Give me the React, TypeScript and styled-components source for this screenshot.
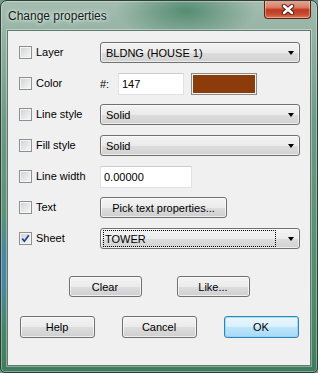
import React from 'react';
import styled, { createGlobalStyle } from 'styled-components';

const GlobalStyle = createGlobalStyle`
  html, body {
    margin: 0;
    padding: 0;
    background: #6f9a86;
  }
  * {
    box-sizing: border-box;
  }
`;

const Window = styled.div`
  width: 318px;
  height: 373px;
  display: flex;
  flex-direction: column;
  border: 1px solid #2f3d37;
  border-radius: 7px 7px 5px 5px;
  overflow: hidden;
  background:
    radial-gradient(ellipse 70px 30px at 185px 10px, rgba(60, 125, 95, 0.75), rgba(60, 125, 95, 0) 100%),
    radial-gradient(ellipse 12px 60px at 0px 270px, rgba(70, 130, 190, 0.9), rgba(70, 130, 190, 0) 100%),
    linear-gradient(to bottom, #a4bdb0 0px, #97b4a5 30px, #6d9a85 120px, #4f8a6c 300px, #3f7c5e 373px);
  box-shadow: inset 0 0 0 1px rgba(255, 255, 255, 0.35);
  font-family: 'Liberation Sans', Arial, sans-serif;
`;

const TitleBar = styled.div`
  height: 29px;
  display: flex;
  align-items: flex-start;
  justify-content: space-between;
  padding: 0 6px 0 7px;
`;

const Title = styled.div`
  margin-top: 8px;
  font-size: 12px;
  color: #10201a;
  text-shadow: 0 0 6px rgba(255, 255, 255, 0.9), 0 0 3px rgba(255, 255, 255, 0.8);
`;

const CloseButton = styled.div`
  width: 47px;
  height: 19px;
  margin-top: -1px;
  display: flex;
  align-items: center;
  justify-content: center;
  border: 1px solid #5b2418;
  border-top: none;
  border-radius: 0 0 4px 4px;
  background: linear-gradient(to bottom, #e9a997 0%, #d9806a 40%, #c0391f 55%, #c84c30 80%, #e07a55 100%);
  box-shadow: inset 0 0 0 1px rgba(255, 220, 210, 0.45);
`;

const Client = styled.div`
  flex: 1;
  margin: 0 6px 6px 6px;
  background: #f0f0f0;
  border: 1px solid #5f7a70;
  box-shadow: 0 0 0 1px rgba(255, 255, 255, 0.35);
  display: flex;
  flex-direction: column;
  padding: 6px 10px 0 11px;
  font-size: 11px;
  color: #000;
`;

const Form = styled.div`
  display: flex;
  flex-direction: column;
`;

const Row = styled.div`
  height: 31px;
  display: grid;
  grid-template-columns: 81px 1fr;
  align-items: center;
`;

const LabelCell = styled.label`
  display: flex;
  align-items: center;
  gap: 4px;
`;

const CheckBox = styled.span`
  width: 13px;
  height: 13px;
  display: flex;
  align-items: center;
  justify-content: center;
  border: 1px solid #8e8f8f;
  background: linear-gradient(135deg, #cdd0d4 0%, #e6e7e9 55%, #f8f8f8 100%);
  box-shadow: inset 0 0 0 1px #f5f5f5;
`;

const LabelText = styled.span`
  line-height: 13px;
`;

const Select = styled.div`
  width: 200px;
  height: 21px;
  display: flex;
  align-items: center;
  padding: 0 5px 0 4px;
  border: 1px solid #707070;
  border-radius: 3px;
  background: linear-gradient(to bottom, #f3f3f3 0%, #ebebeb 50%, #dddddd 51%, #d2d2d2 100%);
  box-shadow: inset 0 0 0 1px rgba(255, 255, 255, 0.6);
`;

const SelectText = styled.span<{ $focused?: boolean }>`
  flex: 1;
  height: 17px;
  display: flex;
  align-items: center;
  margin-left: ${(p) => (p.$focused ? '-2px' : '0')};
  margin-right: ${(p) => (p.$focused ? '12px' : '0')};
  padding-left: ${(p) => (p.$focused ? '1px' : '0')};
  border: ${(p) => (p.$focused ? '1px dotted #000' : '1px solid transparent')};
`;

const Arrow = styled.span`
  width: 0;
  height: 0;
  border-left: 3.5px solid transparent;
  border-right: 3.5px solid transparent;
  border-top: 4px solid #000;
  margin-top: 1px;
`;

const ColorCell = styled.div`
  display: flex;
  align-items: center;
`;

const Hash = styled.span`
  width: 18px;
`;

const TextInput = styled.input<{ $width: number }>`
  width: ${(p) => p.$width}px;
  height: 22px;
  padding: 0 3px;
  border: 1px solid #dfe3e8;
  border-top-color: #c9ccd1;
  background: #fff;
  font-family: 'Liberation Sans', Arial, sans-serif;
  font-size: 11px;
  color: #000;
  outline: none;
`;

const Swatch = styled.div<{ $color: string }>`
  width: 66px;
  height: 22px;
  margin-left: 7px;
  border: 1px solid #8a8a8a;
  padding: 1px;
  background: #f4f4f4;

  &::after {
    content: '';
    display: block;
    width: 100%;
    height: 100%;
    background: ${(p) => p.$color};
  }
`;

const Button = styled.div<{ $width: number; $height: number; $primary?: boolean }>`
  width: ${(p) => p.$width}px;
  height: ${(p) => p.$height}px;
  display: flex;
  align-items: center;
  justify-content: center;
  border: 1px solid ${(p) => (p.$primary ? '#3c7fb1' : '#707070')};
  border-radius: 3px;
  background: ${(p) =>
    p.$primary
      ? 'linear-gradient(to bottom, #eaf6fd 0%, #d9f0fc 50%, #bee6fd 51%, #a7d9f5 100%)'
      : 'linear-gradient(to bottom, #f3f3f3 0%, #ebebeb 50%, #dddddd 51%, #cfcfcf 100%)'};
  box-shadow: inset 0 0 0 1px ${(p) => (p.$primary ? 'rgba(120, 220, 255, 0.7)' : 'rgba(255, 255, 255, 0.65)')};
`;

const ButtonRow = styled.div<{ $gap: number; $top: number }>`
  display: flex;
  justify-content: center;
  gap: ${(p) => p.$gap}px;
  margin-top: ${(p) => p.$top}px;
  padding-right: 1px;
`;

const CloseIcon = () => (
  <svg width="14" height="11" viewBox="0 0 14 11">
    <path d="M3 2 L11 9 M11 2 L3 9" stroke="#4a1a12" strokeWidth="4.4" strokeLinecap="round" />
    <path d="M3 2 L11 9 M11 2 L3 9" stroke="#ffffff" strokeWidth="2.6" strokeLinecap="round" />
  </svg>
);

const CheckMark = () => (
  <svg width="9" height="9" viewBox="0 0 9 9">
    <path d="M1.2 4.6 L3.4 7.2 L7.8 1.3" stroke="#21409a" strokeWidth="1.7" fill="none" />
  </svg>
);

type FieldProps = {
  label: string;
  checked?: boolean;
  children: React.ReactNode;
};

function Field({ label, checked, children }: FieldProps) {
  return (
    <Row>
      <LabelCell>
        <CheckBox>{checked && <CheckMark />}</CheckBox>
        <LabelText>{label}</LabelText>
      </LabelCell>
      <div>{children}</div>
    </Row>
  );
}

function Combo({ value, focused }: { value: string; focused?: boolean }) {
  return (
    <Select>
      <SelectText $focused={focused}>{value}</SelectText>
      <Arrow />
    </Select>
  );
}

export default function App() {
  return (
    <>
      <GlobalStyle />
      <Window>
        <TitleBar>
          <Title>Change properties</Title>
          <CloseButton>
            <CloseIcon />
          </CloseButton>
        </TitleBar>
        <Client>
          <Form>
            <Field label="Layer">
              <Combo value="BLDNG (HOUSE 1)" />
            </Field>
            <Field label="Color">
              <ColorCell>
                <Hash>#:</Hash>
                <TextInput $width={66} readOnly value="147" />
                <Swatch $color="#8c3c0a" />
              </ColorCell>
            </Field>
            <Field label="Line style">
              <Combo value="Solid" />
            </Field>
            <Field label="Fill style">
              <Combo value="Solid" />
            </Field>
            <Field label="Line width">
              <TextInput $width={92} readOnly value="0.00000" />
            </Field>
            <Field label="Text">
              <Button $width={127} $height={21}>Pick text properties...</Button>
            </Field>
            <Field label="Sheet" checked>
              <Combo value="TOWER" focused />
            </Field>
          </Form>
          <ButtonRow $gap={35} $top={22}>
            <Button $width={73} $height={21}>Clear</Button>
            <Button $width={73} $height={21}>Like...</Button>
          </ButtonRow>
          <ButtonRow $gap={27} $top={19}>
            <Button $width={75} $height={22}>Help</Button>
            <Button $width={75} $height={22}>Cancel</Button>
            <Button $width={75} $height={22} $primary>OK</Button>
          </ButtonRow>
        </Client>
      </Window>
    </>
  );
}
